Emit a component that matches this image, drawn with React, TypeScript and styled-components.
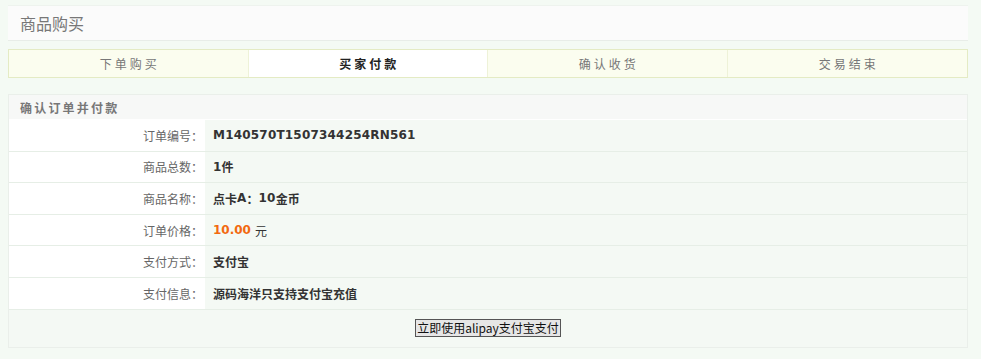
import React from "react";
import styled, { createGlobalStyle } from "styled-components";

const Global = createGlobalStyle`
  html, body { margin: 0; padding: 0; background: #f4faf4; }
  body { font-family: "Noto Sans CJK SC", "Noto Sans", sans-serif; font-size: 12px; color: #333; }
`;

const Page = styled.div`
  padding: 5px 13px 0 8px;
  display: flex;
  flex-direction: column;
`;

const TitleBar = styled.div`
  height: 36px;
  box-sizing: border-box;
  background: #fbfbfb;
  border-top: 1px solid #eef3ee;
  border-bottom: 1px solid #e8ede8;
  display: flex;
  align-items: center;
  padding-left: 12px;
  font-size: 16px;
  color: #777;
`;

const Steps = styled.div`
  margin-top: 8px;
  height: 29px;
  box-sizing: border-box;
  border: 1px solid #e4ebc4;
  background: #fbfdef;
  display: grid;
  grid-template-columns: repeat(4, 1fr);
`;

const Step = styled.div<{ $active?: boolean }>`
  display: flex;
  align-items: center;
  justify-content: center;
  letter-spacing: 3px;
  text-indent: 3px;
  font-size: 12px;
  color: ${(p) => (p.$active ? "#222" : "#777")};
  font-weight: ${(p) => (p.$active ? 700 : 400)};
  background: ${(p) => (p.$active ? "#ffffff" : "transparent")};
  border-right: 1px solid #eef2d8;
  &:last-child { border-right: none; }
`;

const Panel = styled.div`
  margin-top: 16px;
  border: 1px solid #eaefea;
  background: #f4f9f4;
`;

const PanelHead = styled.div`
  height: 25px;
  box-sizing: border-box;
  background: #f7f8f7;
  border-bottom: 1px solid #fff;
  display: flex;
  align-items: center;
  padding-left: 11px;
  font-size: 12px;
  font-weight: 700;
  letter-spacing: 2.2px;
  color: #777;
`;

const Row = styled.div`
  display: grid;
  grid-template-columns: 196px 1fr;
  height: 31.6px;
  box-sizing: border-box;
  border-bottom: 1px solid #e6eee6;
`;

const Label = styled.div`
  background: #ffffff;
  display: flex;
  align-items: center;
  justify-content: flex-end;
  padding-right: 2px;
  color: #666;
  font-size: 12px;
`;

const Value = styled.div`
  display: flex;
  align-items: center;
  padding-left: 8px;
  font-weight: 700;
  font-size: 12px;
  color: #333;
`;

const Mono = styled.span`
  font-family: "DejaVu Sans", "Noto Sans CJK SC", sans-serif;
  font-size: 12px;
  font-weight: 700;
  letter-spacing: 0.2px;
`;

const Price = styled.span`
  color: #f26a10;
  font-family: "DejaVu Sans", sans-serif;
  font-weight: 700;
`;

const Unit = styled.span`
  font-weight: 400;
  margin-left: 4px;
`;

const Actions = styled.div`
  height: 37px;
  display: flex;
  align-items: center;
  justify-content: center;
`;

const PayButton = styled.button`
  font-family: "Noto Sans CJK SC", sans-serif;
  font-size: 12px;
  height: 18px;
  line-height: 14px;
  padding: 0 1px;
  background: #e6e6e6;
  border: 1px solid #555;
  color: #111;
  border-radius: 0;
  cursor: pointer;
`;

const steps = ["下单购买", "买家付款", "确认收货", "交易结束"];

export default function App() {
  return (
    <>
      <Global />
      <Page>
        <TitleBar>商品购买</TitleBar>
        <Steps>
          {steps.map((s, i) => (
            <Step key={s} $active={i === 1}>{s}</Step>
          ))}
        </Steps>
        <Panel>
          <PanelHead>确认订单并付款</PanelHead>
          <Row>
            <Label>订单编号：</Label>
            <Value><Mono>M140570T1507344254RN561</Mono></Value>
          </Row>
          <Row>
            <Label>商品总数：</Label>
            <Value><Mono>1</Mono>件</Value>
          </Row>
          <Row>
            <Label>商品名称：</Label>
            <Value>点卡<Mono>A</Mono>：<Mono>10</Mono>金币</Value>
          </Row>
          <Row>
            <Label>订单价格：</Label>
            <Value><Price>10.00</Price><Unit>元</Unit></Value>
          </Row>
          <Row>
            <Label>支付方式：</Label>
            <Value>支付宝</Value>
          </Row>
          <Row>
            <Label>支付信息：</Label>
            <Value>源码海洋只支持支付宝充值</Value>
          </Row>
          <Actions>
            <PayButton>立即使用alipay支付宝支付</PayButton>
          </Actions>
        </Panel>
      </Page>
    </>
  );
}
